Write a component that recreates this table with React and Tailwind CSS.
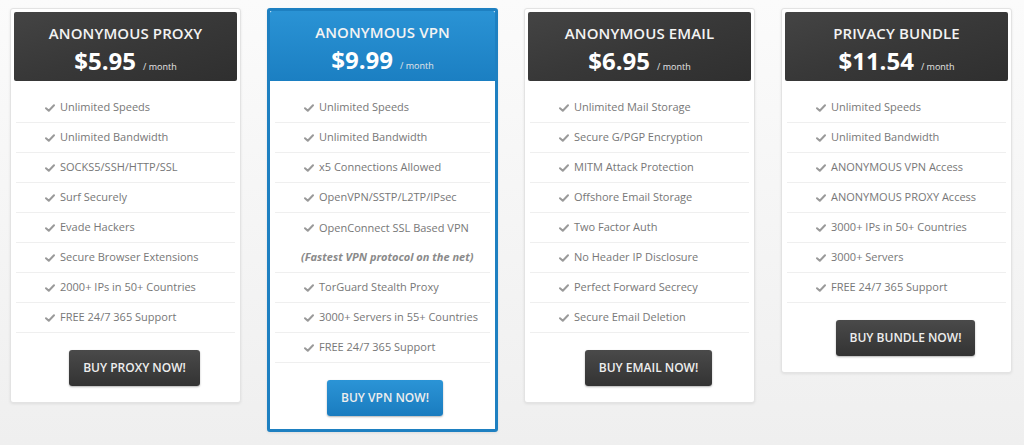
const plans = [
  {
    name: "ANONYMOUS PROXY",
    price: "$5.95",
    button: "BUY PROXY NOW!",
    features: [
      "Unlimited Speeds",
      "Unlimited Bandwidth",
      "SOCKS5/SSH/HTTP/SSL",
      "Surf Securely",
      "Evade Hackers",
      "Secure Browser Extensions",
      "2000+ IPs in 50+ Countries",
      "FREE 24/7 365 Support",
    ],
  },
  {
    name: "ANONYMOUS VPN",
    price: "$9.99",
    button: "BUY VPN NOW!",
    featured: true,
    features: [
      "Unlimited Speeds",
      "Unlimited Bandwidth",
      "x5 Connections Allowed",
      "OpenVPN/SSTP/L2TP/IPsec",
      { text: "OpenConnect SSL Based VPN", noBorder: true },
      { text: "(Fastest VPN protocol on the net)", note: true },
      "TorGuard Stealth Proxy",
      "3000+ Servers in 55+ Countries",
      "FREE 24/7 365 Support",
    ],
  },
  {
    name: "ANONYMOUS EMAIL",
    price: "$6.95",
    button: "BUY EMAIL NOW!",
    features: [
      "Unlimited Mail Storage",
      "Secure G/PGP Encryption",
      "MITM Attack Protection",
      "Offshore Email Storage",
      "Two Factor Auth",
      "No Header IP Disclosure",
      "Perfect Forward Secrecy",
      "Secure Email Deletion",
    ],
  },
  {
    name: "PRIVACY BUNDLE",
    price: "$11.54",
    button: "BUY BUNDLE NOW!",
    features: [
      "Unlimited Speeds",
      "Unlimited Bandwidth",
      "ANONYMOUS VPN Access",
      "ANONYMOUS PROXY Access",
      "3000+ IPs in 50+ Countries",
      "3000+ Servers",
      "FREE 24/7 365 Support",
    ],
  },
]

const Check = () => (
  <svg width="10" height="8" viewBox="0 0 10 8" className="shrink-0">
    <path d="M1 4.2 L3.8 6.8 L9 1.3" fill="none" stroke="#9a9a9a" strokeWidth="2" strokeLinecap="round" strokeLinejoin="round" />
  </svg>
)

function FeatureRow({ item }) {
  const f = typeof item === "string" ? { text: item } : item
  if (f.note) {
    return (
      <li className="h-[30px] flex items-center pl-[26px] border-b border-[#efefef] text-[11px] italic font-bold text-[#8a8a8a] whitespace-nowrap">
        {f.text}
      </li>
    )
  }
  return (
    <li className={`h-[30px] flex items-center gap-[5px] pl-[29px] text-[11px] text-[#777] whitespace-nowrap ${f.noBorder ? "" : "border-b border-[#efefef]"}`}>
      <Check />
      <span>{f.text}</span>
    </li>
  )
}

function PlanCard({ plan }) {
  const featured = plan.featured
  return (
    <div
      className={`w-[231px] shrink-0 bg-white rounded-[3px] shadow-[0_1px_3px_rgba(0,0,0,0.08)] ${
        featured ? "border-[3px] border-[#1e80c1]" : "border border-[#e3e3e3] p-[3px]"
      }`}
    >
      {/* Header */}
      <div
        className={`flex flex-col items-center text-white ${
          featured
            ? "h-[70px] pt-[11px] rounded-t-[2px] bg-gradient-to-b from-[#2a93d5] to-[#1b7fc2]"
            : "h-[69px] pt-[11px] rounded-[2px] bg-gradient-to-br from-[#444] via-[#383838] to-[#2f2f2f]"
        }`}
      >
        <div className="text-[15px] leading-[20px] font-semibold tracking-[0.1px] text-[#f3f3f3]">{plan.name}</div>
        <div className="flex items-baseline gap-[7px] mt-[4px]">
          <span className="text-[24px] leading-[28px] font-bold">{plan.price}</span>
          <span className="text-[9px] text-[#e6e6e6]">/ month</span>
        </div>
      </div>

      {/* Body */}
      <div className={`pb-[13px] ${featured ? "px-[3px]" : ""}`}>
        <ul className="mx-[2px] pt-[12px]">
          {plan.features.map((f, i) => (
            <FeatureRow key={i} item={f} />
          ))}
        </ul>
        <div className={`flex justify-center mt-[17px] ${featured ? "pl-[5px]" : "pl-[18px]"}`}>
          <button
            className={`h-[36px] px-[14px] rounded-[3px] text-[12px] font-semibold text-[#eee] shadow-[0_1px_2px_rgba(0,0,0,0.3)] ${
              featured
                ? "bg-gradient-to-b from-[#2b94d6] to-[#1a7cbf]"
                : "bg-gradient-to-b from-[#4a4a4a] to-[#333]"
            }`}
          >
            {plan.button}
          </button>
        </div>
      </div>
    </div>
  )
}

export default function App() {
  return (
    <div
      className="w-[1024px] h-[445px] overflow-hidden bg-gradient-to-b from-[#fbfbfb] to-[#efefef] pt-[8px] pl-[10px] flex items-start gap-[26px]"
      style={{ fontFamily: '"Open Sans", "Liberation Sans", sans-serif' }}
    >
      {plans.map((p) => (
        <PlanCard key={p.name} plan={p} />
      ))}
    </div>
  )
}
